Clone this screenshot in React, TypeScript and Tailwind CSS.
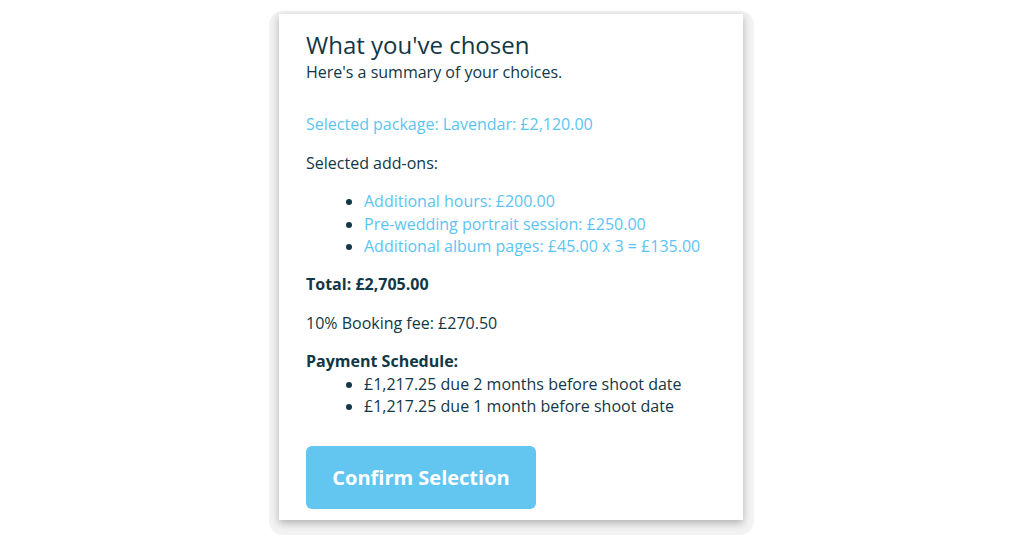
const addOns = [
  "Additional hours: £200.00",
  "Pre-wedding portrait session: £250.00",
  "Additional album pages: £45.00 x 3 = £135.00",
]

const schedule = [
  "£1,217.25 due 2 months before shoot date",
  "£1,217.25 due 1 month before shoot date",
]

const App = () => {
  return (
    <div className="w-[1024px] h-[538px] bg-white flex justify-center pt-[11px] overflow-hidden" style={{ fontFamily: '"Open Sans", "Noto Sans", sans-serif' }}>
      <div className="w-[485px] h-[524px] ml-[-1px] rounded-[14px] bg-[#f3f3f3] pl-[10px] pr-[11px] pt-[3px]">
        <div className="h-[506px] bg-white shadow-[0_3px_8px_rgba(0,0,0,0.28)] px-[27px] pt-[14px] text-[#123746] text-[16px] leading-[22.4px]">
          <h2 className="text-[24px] leading-[33px]">What you've chosen</h2>
          <p className="mb-[30px]">Here's a summary of your choices.</p>

          <p className="text-[#5cc4f3] mb-4">Selected package: Lavendar: £2,120.00</p>

          <p className="mb-4">Selected add-ons:</p>
          <ul className="list-disc pl-[58px] mb-4">
            {addOns.map((a) => (
              <li key={a} className="text-[#5cc4f3] marker:text-[#123746]">{a}</li>
            ))}
          </ul>

          <p className="font-bold mb-4">Total: £2,705.00</p>

          <p className="mb-4">10% Booking fee: £270.50</p>

          <p className="font-bold">Payment Schedule:</p>
          <ul className="list-disc pl-[58px]">
            {schedule.map((s) => (
              <li key={s}>{s}</li>
            ))}
          </ul>

          <button className="mt-[29px] w-[230px] h-[63px] rounded-[6px] bg-[#63c6f1] text-white font-bold text-[20px]">
            Confirm Selection
          </button>
        </div>
      </div>
    </div>
  )
}

export default App
